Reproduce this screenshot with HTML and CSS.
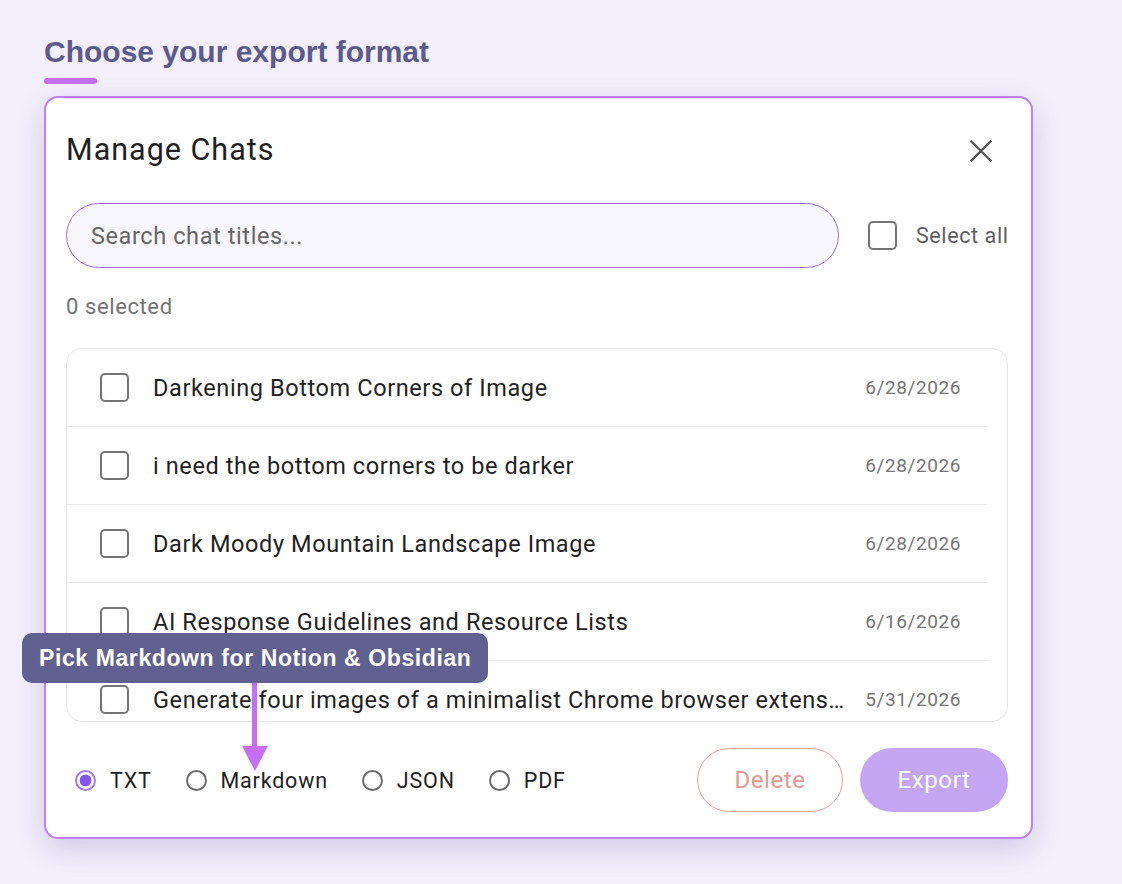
FILE: index.html
```html
<!DOCTYPE html>
<html lang="en">
<head>
<meta charset="utf-8">
<title>Manage Chats</title>
<link rel="stylesheet" href="styles.css">
</head>
<body>
<div class="page">
  <h1 class="headline">Choose your export format</h1>
  <div class="headline-bar"></div>

  <div class="modal">
    <div class="modal-header">
      <h2 class="modal-title">Manage Chats</h2>
      <button class="close-btn" aria-label="Close">
        <svg width="22" height="22" viewBox="0 0 22 22"><path d="M1.5 1.5 L20.5 20.5 M20.5 1.5 L1.5 20.5" stroke="#555" stroke-width="2.3" fill="none" stroke-linecap="square"/></svg>
      </button>
    </div>

    <div class="search-row">
      <input class="search-input" type="text" placeholder="Search chat titles...">
      <label class="select-all"><span class="checkbox"></span><span>Select all</span></label>
    </div>

    <div class="selected-count">0 selected</div>

    <div class="chat-list">
      <div class="chat-rows">
        <div class="chat-row"><span class="checkbox"></span><span class="chat-title">Darkening Bottom Corners of Image</span><span class="chat-date">6/28/2026</span></div>
        <div class="chat-row"><span class="checkbox"></span><span class="chat-title">i need the bottom corners to be darker</span><span class="chat-date">6/28/2026</span></div>
        <div class="chat-row"><span class="checkbox"></span><span class="chat-title">Dark Moody Mountain Landscape Image</span><span class="chat-date">6/28/2026</span></div>
        <div class="chat-row"><span class="checkbox"></span><span class="chat-title">AI Response Guidelines and Resource Lists</span><span class="chat-date">6/16/2026</span></div>
        <div class="chat-row"><span class="checkbox"></span><span class="chat-title">Generate four images of a minimalist Chrome browser extension icon</span><span class="chat-date">5/31/2026</span></div>
      </div>
    </div>

    <div class="footer">
      <div class="formats">
        <label class="format"><span class="radio checked"></span><span>TXT</span></label>
        <label class="format"><span class="radio"></span><span>Markdown</span></label>
        <label class="format"><span class="radio"></span><span>JSON</span></label>
        <label class="format"><span class="radio"></span><span>PDF</span></label>
      </div>
      <div class="actions">
        <button class="btn btn-delete">Delete</button>
        <button class="btn btn-export">Export</button>
      </div>
    </div>
  </div>

  <div class="tip">Pick Markdown for Notion &amp; Obsidian</div>
  <div class="tip-stem"></div>
  <div class="tip-head"></div>
</div>
</body>
</html>
```

FILE: styles.css
```css
* { box-sizing: border-box; }

html, body {
  margin: 0;
  padding: 0;
}

body {
  background: #f3effc;
  font-family: Roboto, "Noto Sans", sans-serif;
  width: 1122px;
  height: 884px;
  overflow: hidden;
}

.page {
  position: relative;
  height: 884px;
  padding: 34px 0 0 44px;
}

.headline {
  margin: 0;
  font: bold 30px/36px "Liberation Sans", Arial, sans-serif;
  color: #5d5a8c;
}

.headline-bar {
  width: 53px;
  height: 6px;
  border-radius: 3px;
  background: #c66ef6;
  margin-top: 8px;
}

.modal {
  margin-top: 12px;
  width: 989px;
  height: 743px;
  background: #fff;
  border: 2px solid #c27ef5;
  border-radius: 14px;
  box-shadow: 0 10px 28px rgba(92, 72, 150, 0.22);
  padding: 29px 23px 25px 20px;
  display: flex;
  flex-direction: column;
}

.modal-header {
  display: flex;
  justify-content: space-between;
  align-items: flex-start;
}

.modal-title {
  margin: 3px 0 0;
  font-weight: 400;
  font-size: 30.5px;
  line-height: 40px;
  letter-spacing: 1px;
  color: #1f1f1f;
}

.close-btn {
  width: 44px;
  height: 44px;
  margin: 2px 5px 0 0;
  border: 0;
  background: none;
  padding: 0;
  display: flex;
  align-items: center;
  justify-content: center;
}

.search-row {
  margin-top: 30px;
  display: flex;
  align-items: center;
  height: 65px;
}

.search-input {
  flex: none;
  width: 773px;
  height: 65px;
  border: 1px solid #9c70da;
  border-radius: 33px;
  background: #f8f7fb;
  padding: 0 0 0 24px;
  font-family: Roboto, sans-serif;
  font-size: 23.5px;
  letter-spacing: 0.6px;
  color: #222;
  outline: none;
}

.search-input::placeholder {
  color: #666;
}

.select-all {
  margin-left: 29px;
  display: flex;
  align-items: center;
  gap: 19px;
  font-size: 21.5px;
  letter-spacing: 0.6px;
  color: #5f5f5f;
  white-space: nowrap;
}

.checkbox {
  width: 29px;
  height: 29px;
  border: 2px solid #747474;
  border-radius: 5px;
  flex: none;
  background: #fff;
}

.selected-count {
  margin-top: 26px;
  font-size: 22px;
  line-height: 26px;
  letter-spacing: 0.6px;
  color: #747474;
}

.chat-list {
  margin-top: 28px;
  height: 374px;
  border: 1px solid #e6e6ea;
  border-radius: 16px;
  overflow: hidden;
  flex: none;
}

.chat-rows {
  margin-right: 20px;
}

.chat-row {
  height: 78px;
  border-bottom: 1px solid #e8e8ec;
  display: flex;
  align-items: center;
  padding: 0 26px 0 33px;
}

.chat-title {
  flex: 1;
  min-width: 0;
  margin-left: 24px;
  font-size: 23.5px;
  letter-spacing: 0.6px;
  color: #1f1f1f;
  white-space: nowrap;
  overflow: hidden;
  text-overflow: ellipsis;
}

.chat-date {
  margin-left: 20px;
  font-size: 19px;
  letter-spacing: 0.6px;
  color: #757575;
  flex: none;
}

.footer {
  margin-top: 26px;
  height: 64px;
  display: flex;
  align-items: center;
  justify-content: space-between;
}

.formats {
  display: flex;
  align-items: center;
  gap: 34px;
  padding-left: 9px;
}

.format {
  display: flex;
  align-items: center;
  gap: 14px;
  font-size: 21.5px;
  letter-spacing: 0.8px;
  color: #1f1f1f;
}

.radio {
  width: 21px;
  height: 21px;
  border: 2px solid #6b6b6b;
  border-radius: 50%;
  flex: none;
  background: #fff;
}

.radio.checked {
  border-color: #a07af0;
  background: radial-gradient(circle, #8553ee 0 5.5px, #fff 6.2px);
}

.actions {
  display: flex;
  gap: 17px;
}

.btn {
  height: 64px;
  border-radius: 32px;
  font-family: Roboto, sans-serif;
  font-size: 24px;
  letter-spacing: 0.6px;
  padding: 0;
}

.btn-delete {
  width: 146px;
  border: 1px solid #e6a39c;
  background: #fff;
  color: #e49a92;
}

.btn-export {
  width: 148px;
  border: 0;
  background: #c5a6f5;
  color: #fff;
}

.tip {
  position: absolute;
  left: 22px;
  top: 633px;
  height: 50px;
  padding: 0 17px;
  background: #616191;
  color: #fff;
  border-radius: 10px;
  font: bold 23px/50px "Liberation Sans", Arial, sans-serif;
  letter-spacing: 0.6px;
  white-space: nowrap;
}

.tip-stem {
  position: absolute;
  left: 252px;
  top: 683px;
  width: 5px;
  height: 64px;
  background: #c66ef6;
}

.tip-head {
  position: absolute;
  left: 241.5px;
  top: 746px;
  width: 0;
  height: 0;
  border-left: 13px solid transparent;
  border-right: 13px solid transparent;
  border-top: 25px solid #c66ef6;
}
```
